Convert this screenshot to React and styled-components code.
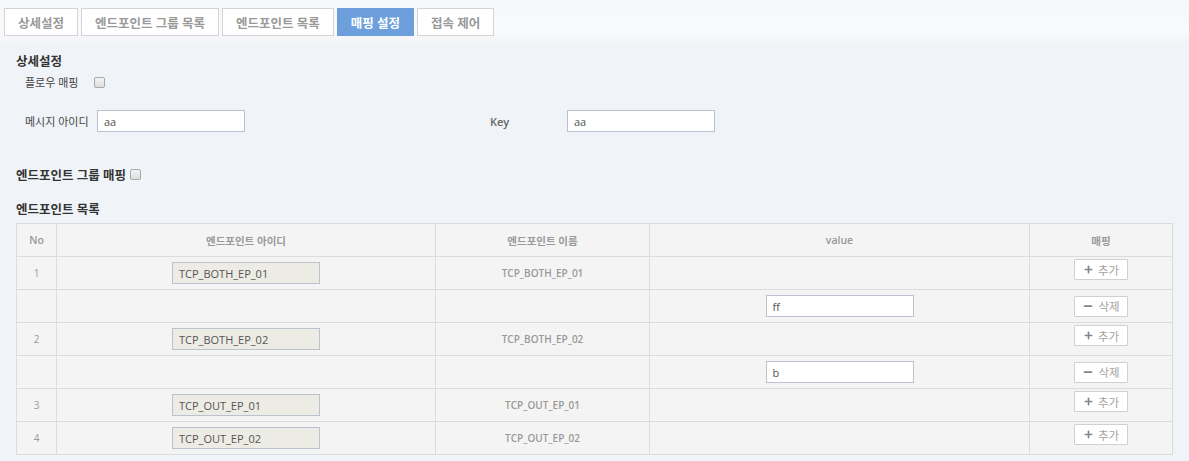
import React from "react";
import styled, { createGlobalStyle } from "styled-components";
import { Plus, Minus } from "lucide-react";

const GlobalStyle = createGlobalStyle`
  html, body {
    margin: 0;
    padding: 0;
    background: #f0f3f7;
    font-family: "Open Sans", "Noto Sans CJK KR", sans-serif;
  }
`;

const Page = styled.div`
  width: 1189px;
  height: 461px;
  overflow: hidden;
  background: #f0f3f7;
`;

const TabBar = styled.div`
  display: flex;
  gap: 3px;
  padding: 8px 0 0 4px;
  height: 48px;
  box-sizing: border-box;
  background: linear-gradient(#f6f7f9 0, #f9fafb 30px, #f0f3f7 48px);
`;

const Tab = styled.div`
  height: 28px;
  box-sizing: border-box;
  padding: 0 13px;
  display: flex;
  align-items: center;
  font-size: 12.5px;
  font-weight: 600;
  color: ${(p) => (p.active ? "#fff" : "#999")};
  background: ${(p) => (p.active ? "#6d9fdd" : "#fff")};
  border: 1px solid ${(p) => (p.active ? "#6d9fdd" : "#d4d4d4")};
  white-space: nowrap;
`;

const Content = styled.div`
  padding: 3px 17px 0 16px;
`;

const Heading = styled.div`
  display: flex;
  align-items: center;
  gap: 4px;
  font-size: 12.5px;
  font-weight: 700;
  color: #333;
  height: 18px;
  margin-top: ${(p) => p.top || 0}px;
`;

const FormRow = styled.div`
  display: grid;
  grid-template-columns: ${(p) => p.cols};
  align-items: center;
  padding-left: 9px;
  margin-top: ${(p) => p.top || 0}px;
`;

const Label = styled.span`
  font-size: 11px;
  font-weight: ${(p) => (p.strong ? 600 : 400)};
  color: ${(p) => (p.strong ? "#666" : "#444")};
`;

const Check = styled.input.attrs({ type: "checkbox" })`
  appearance: none;
  margin: 0;
  width: 11px;
  height: 11px;
  border: 1px solid #a9a9a9;
  border-radius: 2px;
  background: linear-gradient(#f3f3f3, #dedede);
`;

const TextInput = styled.input`
  width: 148px;
  height: 22px;
  box-sizing: border-box;
  padding: 0 6px;
  border: 1px solid #b9c2ce;
  background: ${(p) => (p.readOnly ? "#ecebe4" : "#fff")};
  font-family: inherit;
  font-size: 11px;
  color: #555;
  outline: none;
`;

const Table = styled.table`
  margin-top: 6px;
  width: 1156px;
  border-collapse: collapse;
  table-layout: fixed;
  background: #f4f4f4;
`;

const Th = styled.th`
  height: 32px;
  border: 1px solid #dcdcdc;
  font-size: 10.5px;
  font-weight: 600;
  color: #999;
  text-align: center;
  padding: 0;
`;

const Td = styled.td`
  height: 32px;
  border: 1px solid #dcdcdc;
  font-size: 10px;
  font-weight: ${(p) => (p.bold ? 600 : 400)};
  color: #999;
  text-align: center;
  padding: 0;
  vertical-align: middle;
`;

const ActionButton = styled.button`
  display: inline-flex;
  align-items: center;
  justify-content: center;
  gap: 4px;
  width: 54px;
  height: 21px;
  margin-top: ${(p) => (p.shift ? -9 : 0)}px;
  vertical-align: middle;
  background: #fff;
  border: 1px solid #d0d0d0;
  border-radius: 1px;
  font-family: inherit;
  font-size: 11.5px;
  color: #a3a3a3;
  padding: 0;
  svg {
    color: #7f858f;
  }
`;

const rows = [
  { no: 1, id: "TCP_BOTH_EP_01", name: "TCP_BOTH_EP_01" },
  { value: "ff" },
  { no: 2, id: "TCP_BOTH_EP_02", name: "TCP_BOTH_EP_02" },
  { value: "b" },
  { no: 3, id: "TCP_OUT_EP_01", name: "TCP_OUT_EP_01" },
  { no: 4, id: "TCP_OUT_EP_02", name: "TCP_OUT_EP_02" },
];

const tabs = ["상세설정", "엔드포인트 그룹 목록", "엔드포인트 목록", "매핑 설정", "접속 제어"];

export default function App() {
  return (
    <Page>
      <GlobalStyle />
      <TabBar>
        {tabs.map((t) => (
          <Tab key={t} active={t === "매핑 설정"}>
            {t}
          </Tab>
        ))}
      </TabBar>
      <Content>
        <Heading>상세설정</Heading>
        <FormRow cols="69px 20px" top={5}>
          <Label>플로우 매핑</Label>
          <Check />
        </FormRow>
        <FormRow cols="72px 393px 77px 148px" top={20}>
          <Label>메시지 아이디</Label>
          <TextInput defaultValue="aa" />
          <Label strong>Key</Label>
          <TextInput defaultValue="aa" />
        </FormRow>
        <Heading top={33}>
          엔드포인트 그룹 매핑 <Check />
        </Heading>
        <Heading top={16}>엔드포인트 목록</Heading>
        <Table>
          <colgroup>
            <col style={{ width: 40 }} />
            <col style={{ width: 379 }} />
            <col style={{ width: 214 }} />
            <col style={{ width: 380 }} />
            <col style={{ width: 143 }} />
          </colgroup>
          <thead>
            <tr>
              <Th>No</Th>
              <Th>엔드포인트 아이디</Th>
              <Th>엔드포인트 이름</Th>
              <Th>value</Th>
              <Th>매핑</Th>
            </tr>
          </thead>
          <tbody>
            {rows.map((r, i) => (
              <tr key={i}>
                <Td>{r.no}</Td>
                <Td>{r.id && <TextInput readOnly defaultValue={r.id} />}</Td>
                <Td bold>{r.name}</Td>
                <Td>{r.value && <TextInput defaultValue={r.value} />}</Td>
                <Td>
                  {r.id ? (
                    <ActionButton shift>
                      <Plus size={11} strokeWidth={3.5} /> 추가
                    </ActionButton>
                  ) : (
                    <ActionButton>
                      <Minus size={12} strokeWidth={3.5} /> 삭제
                    </ActionButton>
                  )}
                </Td>
              </tr>
            ))}
          </tbody>
        </Table>
      </Content>
    </Page>
  );
}
